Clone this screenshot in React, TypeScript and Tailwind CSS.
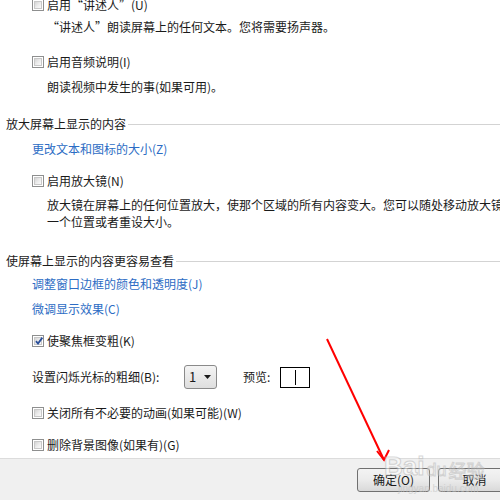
import type { ReactNode } from 'react';

const FONT = '"Noto Sans CJK SC", "Microsoft YaHei", sans-serif';

function CheckBox({ checked = false }: { checked?: boolean }) {
  return (
    <span className="relative w-[12px] h-[12px] shrink-0 border border-[#8e8f8f] bg-white p-px">
      <span className="block w-full h-full bg-gradient-to-br from-[#d4d4d4] via-[#ebebeb] to-[#fafafa] border border-[#c8c8c8]" />
      {checked && (
        <svg className="absolute left-[1px] top-[0px] w-[10px] h-[10px]" viewBox="0 0 10 10">
          <path d="M2 5.2 L4 7.6 L8.4 1.6" fill="none" stroke="#2a4f9a" strokeWidth={1.8} />
        </svg>
      )}
    </span>
  );
}

function CheckRow({ label, checked, className = '' }: { label: string; checked?: boolean; className?: string }) {
  return (
    <div className={`h-[16px] flex items-center pl-[32px] gap-[3px] ${className}`}>
      <CheckBox checked={checked} />
      <span className="whitespace-nowrap">{label}</span>
    </div>
  );
}

function Line({ children, className = '' }: { children: ReactNode; className?: string }) {
  return <div className={`h-[16px] flex items-center pl-[47px] whitespace-nowrap ${className}`}>{children}</div>;
}

function LinkRow({ children, className = '' }: { children: ReactNode; className?: string }) {
  return <div className={`h-[16px] flex items-center pl-[32px] text-[#2c6cc4] whitespace-nowrap ${className}`}>{children}</div>;
}

function Heading({ children, className = '' }: { children: ReactNode; className?: string }) {
  return (
    <div className={`h-[16px] flex items-center pl-[6px] ${className}`}>
      <span className="whitespace-nowrap">{children}</span>
      <span className="flex-1 h-px bg-[#d3d3d3] ml-[2px]" />
    </div>
  );
}

function Button({ children }: { children: ReactNode }) {
  return (
    <div className="w-[73px] h-[24px] shrink-0 rounded-[3px] border border-[#707070] bg-gradient-to-b from-[#f3f3f3] via-[#ebebeb] to-[#d9d9d9] flex items-center justify-center">
      {children}
    </div>
  );
}

export default function App() {
  return (
    <div
      className="relative w-[500px] h-[500px] overflow-hidden bg-white flex flex-col text-[12px] text-[#1a1a1a]"
      style={{ fontFamily: FONT }}
    >
      <div className="flex-1 flex flex-col -mt-[3px]">
        <CheckRow label="启用“讲述人”(U)" />
        <Line className="mt-[6px]">“讲述人”朗读屏幕上的任何文本。您将需要扬声器。</Line>
        <CheckRow label="启用音频说明(I)" className="mt-[19px]" />
        <Line className="mt-[9px]">朗读视频中发生的事(如果可用)。</Line>

        <Heading className="mt-[21px]">放大屏幕上显示的内容</Heading>
        <LinkRow className="mt-[9px]">更改文本和图标的大小(Z)</LinkRow>
        <CheckRow label="启用放大镜(N)" className="mt-[16px]" />
        <Line className="mt-[8px]">放大镜在屏幕上的任何位置放大，使那个区域的所有内容变大。您可以随处移动放大镜，将其锁定在</Line>
        <Line className="mt-[1px]">一个位置或者重设大小。</Line>

        <Heading className="mt-[23px]">使屏幕上显示的内容更容易查看</Heading>
        <LinkRow className="mt-[7px]">调整窗口边框的颜色和透明度(J)</LinkRow>
        <LinkRow className="mt-[9px]">微调显示效果(C)</LinkRow>
        <CheckRow label="使聚焦框变粗(K)" checked className="mt-[16px]" />

        {/* cursor thickness picker with preview */}
        <div className="mt-[16px] h-[24px] flex items-center pl-[32px]">
          <span className="w-[152px] whitespace-nowrap">设置闪烁光标的粗细(B):</span>
          <div className="w-[33px] h-[24px] rounded-[3px] border border-[#8a8a8a] bg-gradient-to-b from-[#f4f4f4] to-[#dedede] flex items-center pl-[4px] gap-[8px]">
            <span className="text-[13px]">1</span>
            <svg className="w-[7px] h-[4px]" viewBox="0 0 7 4">
              <path d="M0 0 H7 L3.5 4 Z" fill="#1a1a1a" />
            </svg>
          </div>
          <span className="ml-[26px] whitespace-nowrap">预览:</span>
          <div className="ml-[10px] w-[30px] h-[21px] border border-black flex justify-center py-[2px]">
            <span className="w-px h-full bg-black" />
          </div>
        </div>

        <CheckRow label="关闭所有不必要的动画(如果可能)(W)" className="mt-[16px]" />
        <CheckRow label="删除背景图像(如果有)(G)" className="mt-[16px]" />
      </div>

      {/* dialog button bar */}
      <div className="h-[42px] shrink-0 border-t border-[#dcdcdc] bg-[#f0f0f0] flex items-start pt-[9px] pl-[357px] gap-[8px]">
        <Button>确定(O)</Button>
        <Button>取消</Button>
      </div>

      {/* red annotation arrow */}
      <svg className="absolute left-0 top-0 w-[500px] h-[500px] pointer-events-none" viewBox="0 0 500 500">
        <path d="M327 339 L384 460" stroke="#ff0000" strokeWidth={2} fill="none" />
        <path d="M377 451 L384 460 L389 450" stroke="#ff0000" strokeWidth={2} fill="none" />
      </svg>

      {/* watermark */}
      <div className="absolute left-[384px] top-[453px] flex items-end gap-[2px] pointer-events-none opacity-50">
        <span className="text-[26px] leading-none font-bold text-white [-webkit-text-stroke:1px_#b4b4b4]" style={{ fontFamily: '"Liberation Sans", sans-serif' }}>
          Bai
        </span>
        <span className="text-[18px] leading-none text-white [-webkit-text-stroke:1px_#b4b4b4]" style={{ fontFamily: '"Liberation Sans", sans-serif' }}>
          du
        </span>
        <span className="text-[18px] leading-none text-white [-webkit-text-stroke:1px_#b4b4b4]">经验</span>
      </div>
      <div className="absolute left-[398px] top-[481px] text-[10px] text-[#c4c4c4] opacity-60 pointer-events-none" style={{ fontFamily: '"Liberation Sans", sans-serif' }}>
        jingyan.baidu.com
      </div>
    </div>
  );
}
